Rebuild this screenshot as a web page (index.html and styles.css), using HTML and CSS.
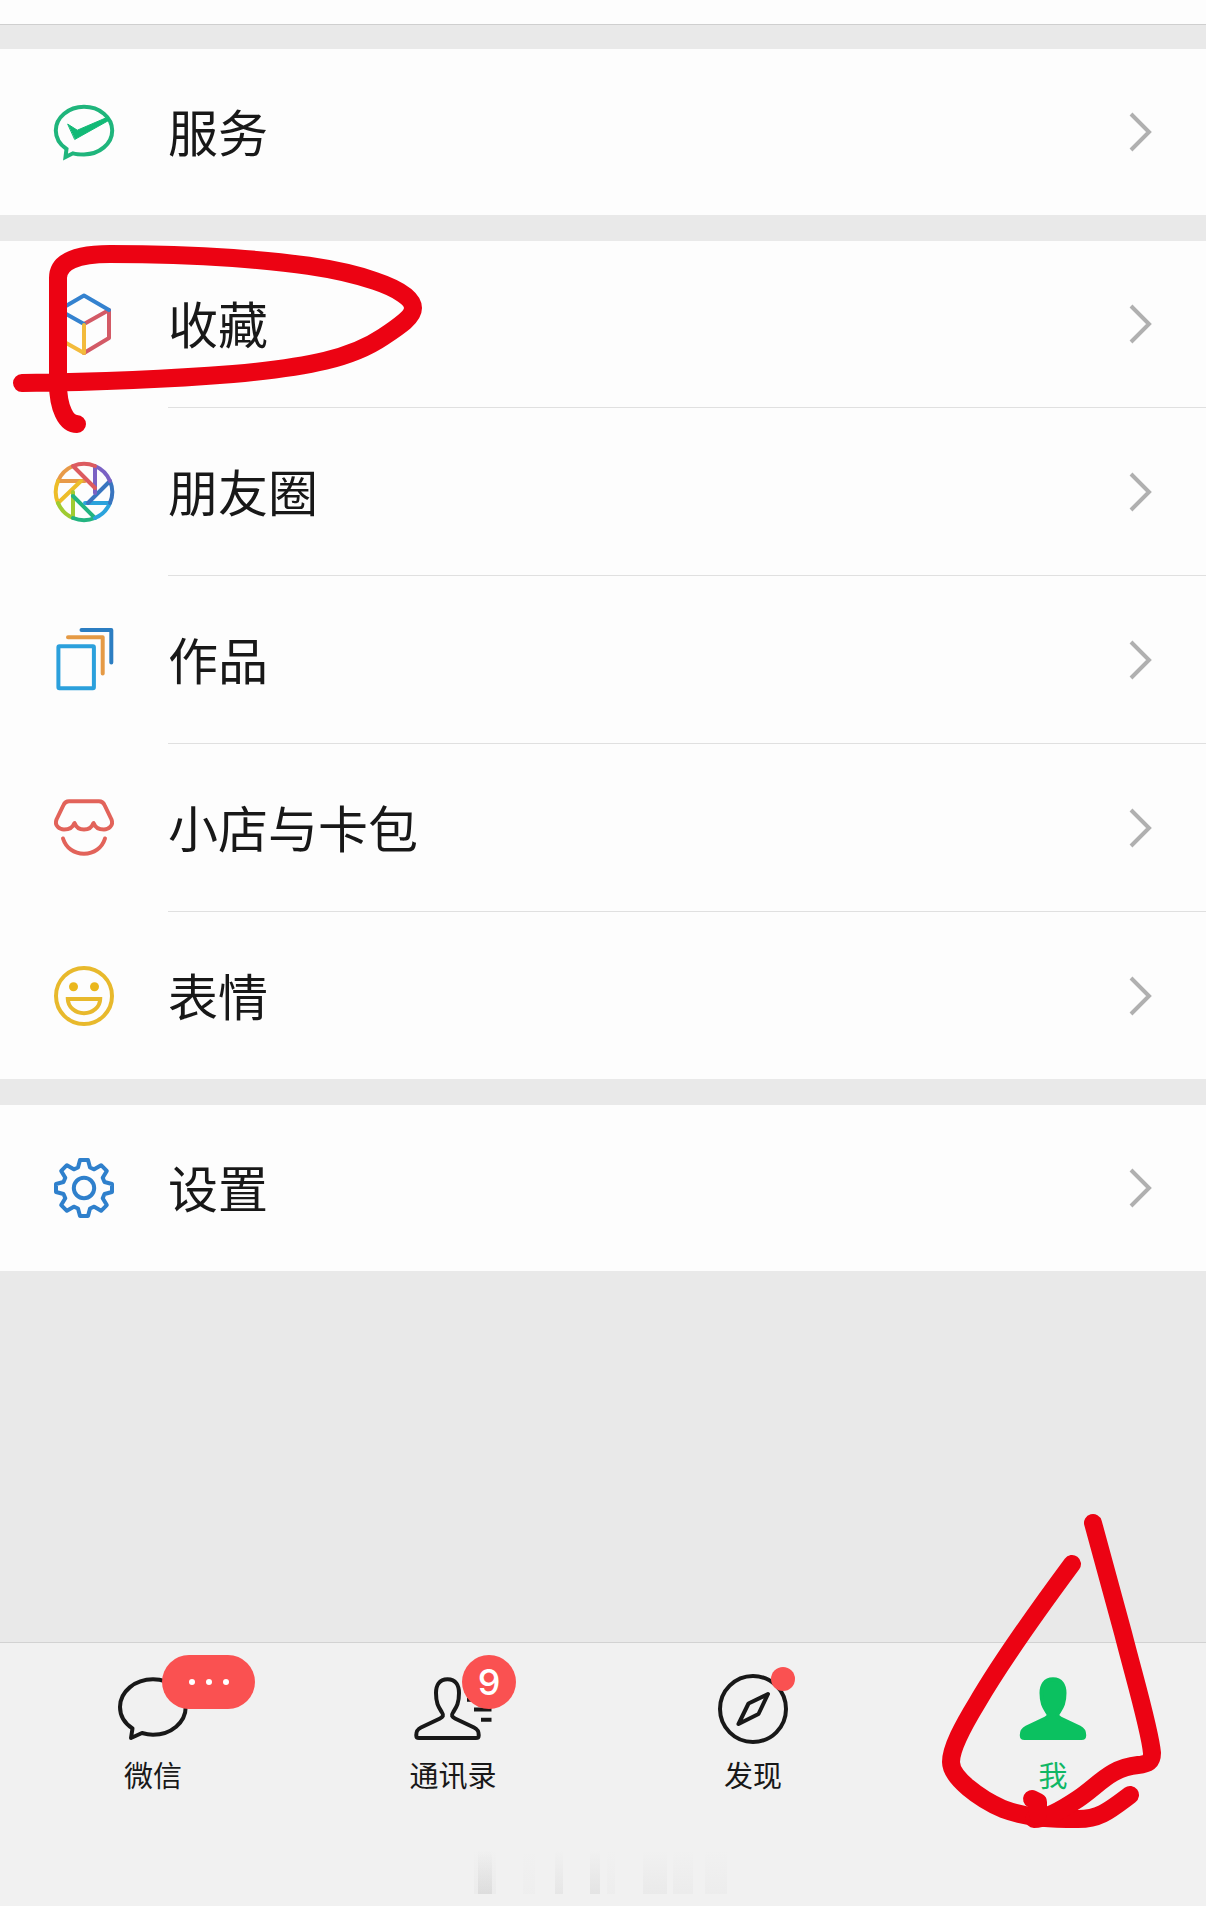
FILE: index.html
```
<!DOCTYPE html>
<html lang="zh-CN">
<head>
    <meta charset="UTF-8">
    <meta name="viewport" content="width=device-width, initial-scale=1.0">
    <title>我</title>
    <link rel="stylesheet" href="styles.css">
</head>
<body>

    <!-- Menu list -->
    <main>
        <div class="profile-edge"></div>

        <section class="group">
            <a class="row" href="#services">
                <svg class="icon" viewBox="0 0 60 60" stroke="#1fb57c">
                    <path d="M19 51.3C22.5 52.3 26 52.4 30 52.4C45.5 52.4 58.2 41.7 58.2 28.5S45.5 4.8 30 4.8S1.8 15.5 1.8 28.5C1.8 36 5.8 42.5 12.5 47L11.5 55Z" stroke-linejoin="miter"/>
                    <path d="M14 22.3L23.3 28.2L54 15L55.5 18L21 37.3Z" fill="#12b976" stroke="#12b976" stroke-width="1"/>
                </svg>
                <span class="label">服务</span>
                <svg class="chevron" viewBox="0 0 22 40"><path d="M1 2L19 20L1 38"/></svg>
            </a>
        </section>

        <section class="group">
            <a class="row" href="#favorites">
                <svg class="icon" viewBox="0 0 60 60">
                    <path d="M30 30V59L5 45V16" stroke="#f3bb3c"/>
                    <path d="M30 30L55 16V44L30 59" stroke="#d35a66"/>
                    <path d="M30 30L5 16L30 1.5L55 16" stroke="#3482cf"/>
                    <path d="M30 31V59" stroke="#f3bb3c"/>
                </svg>
                <span class="label">收藏</span>
                <svg class="chevron" viewBox="0 0 22 40"><path d="M1 2L19 20L1 38"/></svg>
                <svg class="mark mark-favorites" viewBox="0 241 430 200">
                    <path d="M22 383C100 382 170 379 233 374C310 367 352 358 383 337C401 325 413 317 413 308C413 299 399 289 375 281C335 267 285 262 233 258C190 255 150 254 110 254C78 254 58 261 58 278V383C58 408 66 424 77 424"/>
                </svg>
            </a>
            <a class="row" href="#moments">
                <svg class="icon" viewBox="0 0 60 60">
                    <path d="M4 19A28.2 28.2 0 0 1 19 4M4 19H31" stroke="#e89a48"/>
                    <path d="M4 41A28.2 28.2 0 0 1 4 19M4 41L27 19" stroke="#edbd29"/>
                    <path d="M19 56A28.2 28.2 0 0 1 4 41M19 56V30" stroke="#9fcb31"/>
                    <path d="M41 56A28.2 28.2 0 0 1 19 56M41 56L19 34" stroke="#23b480"/>
                    <path d="M56 41A28.2 28.2 0 0 1 41 56M56 41H31" stroke="#2ba3dc"/>
                    <path d="M56 19A28.2 28.2 0 0 1 56 41M56 19L34 41" stroke="#3975bf"/>
                    <path d="M41 4A28.2 28.2 0 0 1 56 19M41 4V31" stroke="#7b62c4"/>
                    <path d="M19 4A28.2 28.2 0 0 1 41 4M19 4L41 26" stroke="#dc5b60"/>
                </svg>
                <span class="label">朋友圈</span>
                <svg class="chevron" viewBox="0 0 22 40"><path d="M1 2L19 20L1 38"/></svg>
            </a>
            <a class="row" href="#works">
                <svg class="icon" viewBox="0 0 60 60">
                    <rect x="4.4" y="16.2" width="35.5" height="42" rx="1" stroke="#2ba0dc"/>
                    <path d="M14 7.2H48.7V43.5" stroke="#e59a45"/>
                    <path d="M27.5 0H57.3V32.5" stroke="#2c7ec2"/>
                </svg>
                <span class="label">作品</span>
                <svg class="chevron" viewBox="0 0 22 40"><path d="M1 2L19 20L1 38"/></svg>
            </a>
            <a class="row" href="#shop">
                <svg class="icon" viewBox="0 0 60 60" stroke="#e2635a">
                    <path d="M15 3.2H45C48 3.2 49.5 4.7 50.5 7L57.5 21.5C60 28 54 31.5 50 31.5C45 31.5 41 29 39.5 25C38 29 34.5 31.5 30 31.5S22 29 20.5 25C19 29 15 31.5 10 31.5C6 31.5 0 28 2.5 21.5L9.5 7C10.5 4.7 12 3.2 15 3.2Z"/>
                    <path d="M9 40.5C12 50 20 55.8 30 55.8S48 50 51 40.5"/>
                </svg>
                <span class="label">小店与卡包</span>
                <svg class="chevron" viewBox="0 0 22 40"><path d="M1 2L19 20L1 38"/></svg>
            </a>
            <a class="row" href="#stickers">
                <svg class="icon" viewBox="0 0 60 60" stroke="#e8b92c">
                    <circle cx="30" cy="30" r="28"/>
                    <circle cx="19.5" cy="20.8" r="4.5" fill="#eab71d" stroke="none"/>
                    <circle cx="40.5" cy="20.8" r="4.5" fill="#eab71d" stroke="none"/>
                    <path d="M13.8 33H46.2C46 41 39 47.2 30 47.2S14 41 13.8 33Z" stroke-linejoin="miter"/>
                </svg>
                <span class="label">表情</span>
                <svg class="chevron" viewBox="0 0 22 40"><path d="M1 2L19 20L1 38"/></svg>
            </a>
        </section>

        <section class="group">
            <a class="row" href="#settings">
                <svg class="icon" viewBox="-30 -30 60 60" stroke="#2f80cc">
                    <path d="M-6 -20.5L-4 -28H4L6 -20.5L10.2 -18.7L17.1 -22.8L22.8 -17.1L18.7 -10.2L20.5 -6L28 -4V4L20.5 6L18.7 10.2L22.8 17.1L17.1 22.8L10.2 18.7L6 20.5L4 28H-4L-6 20.5L-10.2 18.7L-17.1 22.8L-22.8 17.1L-18.7 10.2L-20.5 6L-28 4V-4L-20.5 -6L-18.7 -10.2L-22.8 -17.1L-17.1 -22.8L-10.2 -18.7Z"/>
                    <circle r="10.2"/>
                </svg>
                <span class="label">设置</span>
                <svg class="chevron" viewBox="0 0 22 40"><path d="M1 2L19 20L1 38"/></svg>
            </a>
        </section>
    </main>

    <!-- Bottom tab bar -->
    <footer>
        <nav class="tabs">
            <a class="tab" href="#chats">
                <span class="tab-icon">
                    <svg viewBox="0 0 72 72">
                        <path d="M25 60C28.5 61 32 61.7 36 61.7C54 61.7 68.7 49.5 68.7 34S54 6.3 36 6.3S3 18.5 3 34C3 43 8 50.5 15.5 55.5L14 65Z"/>
                    </svg>
                    <span class="badge badge-more"><i></i><i></i><i></i></span>
                </span>
                微信
            </a>
            <a class="tab" href="#contacts">
                <span class="tab-icon">
                    <svg viewBox="0 0 72 72">
                        <path d="M30.5 6.3C22 6.3 19 12.5 19 20C19 31 22 34.5 25 39.5C27 42.5 26 44 23 45.5L4 54.5C-1 57 -.7 60 -.7 62.5C-.7 64.5 0 65 2 65H59C61 65 61.7 64.5 61.7 62.5C61.7 60 62 57 57 54.5L38 45.5C35 44 34 42.5 36 39.5C39 34.5 42 31 42 20C42 12.5 39 6.3 30.5 6.3Z"/>
                        <path d="M50 26.7H74.5M57 36.5H74.5M64 46.7H74.5" stroke-linecap="butt"/>
                    </svg>
                    <span class="badge">9</span>
                </span>
                通讯录
            </a>
            <a class="tab" href="#discover">
                <span class="tab-icon">
                    <svg viewBox="0 0 72 72">
                        <circle cx="36" cy="36" r="33"/>
                        <path d="M51 21L31.5 30.5L21.5 51L41.5 41Z"/>
                    </svg>
                    <span class="dot"></span>
                </span>
                发现
            </a>
            <a class="tab active" href="#me">
                <span class="tab-icon">
                    <svg viewBox="-5.5 0 72 72">
                        <path d="M30.5 6.3C22 6.3 19 12.5 19 20C19 31 22 34.5 25 39.5C27 42.5 26 44 23 45.5L4 54.5C-1 57 -.7 60 -.7 62.5C-.7 64.5 0 65 2 65H59C61 65 61.7 64.5 61.7 62.5C61.7 60 62 57 57 54.5L38 45.5C35 44 34 42.5 36 39.5C39 34.5 42 31 42 20C42 12.5 39 6.3 30.5 6.3Z"/>
                    </svg>
                </span>
                我
                <svg class="mark mark-me" viewBox="930 1510 240 330">
                    <path d="M1072 1564C1035 1614 1002 1660 977 1703C963 1726 951 1748 951 1762C951 1778 980 1799 1003 1809C1030 1819 1055 1819 1078 1819C1100 1819 1110 1810 1130 1795"/>
                    <path d="M1093 1523L1123 1633C1135 1680 1150 1730 1152 1753C1152 1762 1148 1764 1138 1765C1110 1768 1100 1784 1078 1799C1060 1811 1045 1819 1034 1819"/>
                    <path d="M1032 1799L1038 1802V1815"/>
                </svg>
            </a>
        </nav>

        <!-- Faded smudge under the tabs -->
        <svg class="smudge" viewBox="0 0 264 46">
            <defs>
                <linearGradient id="fade" x1="0" y1="0" x2="0" y2="1">
                    <stop offset="0" stop-color="#999" stop-opacity="0"/>
                    <stop offset="1" stop-color="#999"/>
                </linearGradient>
            </defs>
            <g fill="url(#fade)">
                <rect x="3" y="2" width="22" height="44" opacity=".06"/>
                <rect x="7" y="2" width="14" height="44" opacity=".18"/>
                <rect x="52" y="2" width="12" height="44" opacity=".03"/>
                <rect x="84" y="2" width="8" height="44" opacity=".12"/>
                <rect x="119" y="2" width="10" height="44" opacity=".15"/>
                <rect x="136" y="2" width="8" height="44" opacity=".04"/>
                <rect x="172" y="2" width="24" height="44" opacity=".08"/>
                <rect x="202" y="2" width="20" height="44" opacity=".06"/>
                <rect x="234" y="2" width="22" height="44" opacity=".05"/>
            </g>
        </svg>
    </footer>

</body>
</html>
```
FILE: styles.css
```
/* Reset */
* {
    margin: 0;
    padding: 0;
    box-sizing: border-box;
}

body {
    display: flex;
    flex-direction: column;
    min-height: 100vh;
    font-family: 'Noto Sans CJK SC', 'Noto Sans', sans-serif;
    background-color: #e9e9e9;
    color: #181818;
}

a {
    color: inherit;
    text-decoration: none;
}

svg {
    display: block;
    overflow: visible;
    fill: none;
    stroke-linecap: round;
    stroke-linejoin: round;
}

/* Menu list */
main {
    flex: 1;
}

.profile-edge {
    height: 25px;
    margin-bottom: 24px;
    background-color: #fdfdfd;
    border-bottom: 1px solid #cfcfcf;
}

.group {
    margin-bottom: 26px;
    background-color: #fdfdfd;
}

.row {
    position: relative;
    display: flex;
    align-items: center;
    min-height: 166px;
    padding-left: 54px;
}

.row:not(:last-child) {
    min-height: 168px;
    padding-bottom: 2px;
}

/* Divider starts where the labels start */
.row:not(:last-child)::after {
    content: "";
    position: absolute;
    left: 168px;
    right: 0;
    bottom: 1px;
    border-bottom: 1px solid #e0e0e0;
}

.icon {
    width: 60px;
    height: 60px;
    margin-right: 54px;
    stroke-width: 4;
}

.label {
    flex: 1;
    padding-bottom: 4px;
    font-size: 50px;
    line-height: 60px;
}

.chevron {
    width: 22px;
    height: 40px;
    margin-right: 54px;
    stroke: #b0b0b0;
    stroke-width: 4;
    stroke-linecap: butt;
    stroke-linejoin: miter;
}

/* Tab bar */
footer {
    min-height: 264px;
    padding: 30px 3px 10px;
    background-color: #f1f1f1;
    border-top: 1px solid #d2d2d2;
}

.tabs {
    display: flex;
}

.tab {
    position: relative;
    flex: 1;
    display: flex;
    flex-direction: column;
    align-items: center;
    gap: 11px;
    font-size: 29px;
    line-height: 36px;
}

.tab-icon {
    position: relative;
    width: 72px;
    height: 72px;
    stroke: #181818;
    stroke-width: 4;
}

.active {
    color: #10b765;
}

.active .tab-icon {
    stroke: #0bc160;
}

.active .tab-icon path {
    fill: #0bc160;
}

.badge {
    position: absolute;
    top: -18px;
    left: 45px;
    display: flex;
    align-items: center;
    justify-content: center;
    min-width: 54px;
    height: 54px;
    border-radius: 27px;
    background-color: #fa5151;
    color: #fff;
    font-family: Inter, sans-serif;
    font-size: 36px;
    font-weight: 500;
}

.badge-more {
    width: 93px;
    gap: 11px;
}

.badge-more i {
    width: 6px;
    height: 6px;
    border-radius: 50%;
    background-color: #fff;
}

.dot {
    position: absolute;
    top: -6px;
    left: 54px;
    width: 24px;
    height: 24px;
    border-radius: 50%;
    background-color: #fa5151;
}

.smudge {
    width: 264px;
    height: 46px;
    margin: 56px auto 0;
}

/* Hand-drawn red marks */
.mark {
    position: absolute;
    z-index: 2;
    stroke: #ec0313;
    stroke-width: 18;
    pointer-events: none;
}

.mark-favorites {
    top: 0;
    left: 0;
    width: 430px;
    height: 200px;
}

.mark-me {
    top: -163px;
    left: 27px;
    width: 240px;
    height: 330px;
}
```
